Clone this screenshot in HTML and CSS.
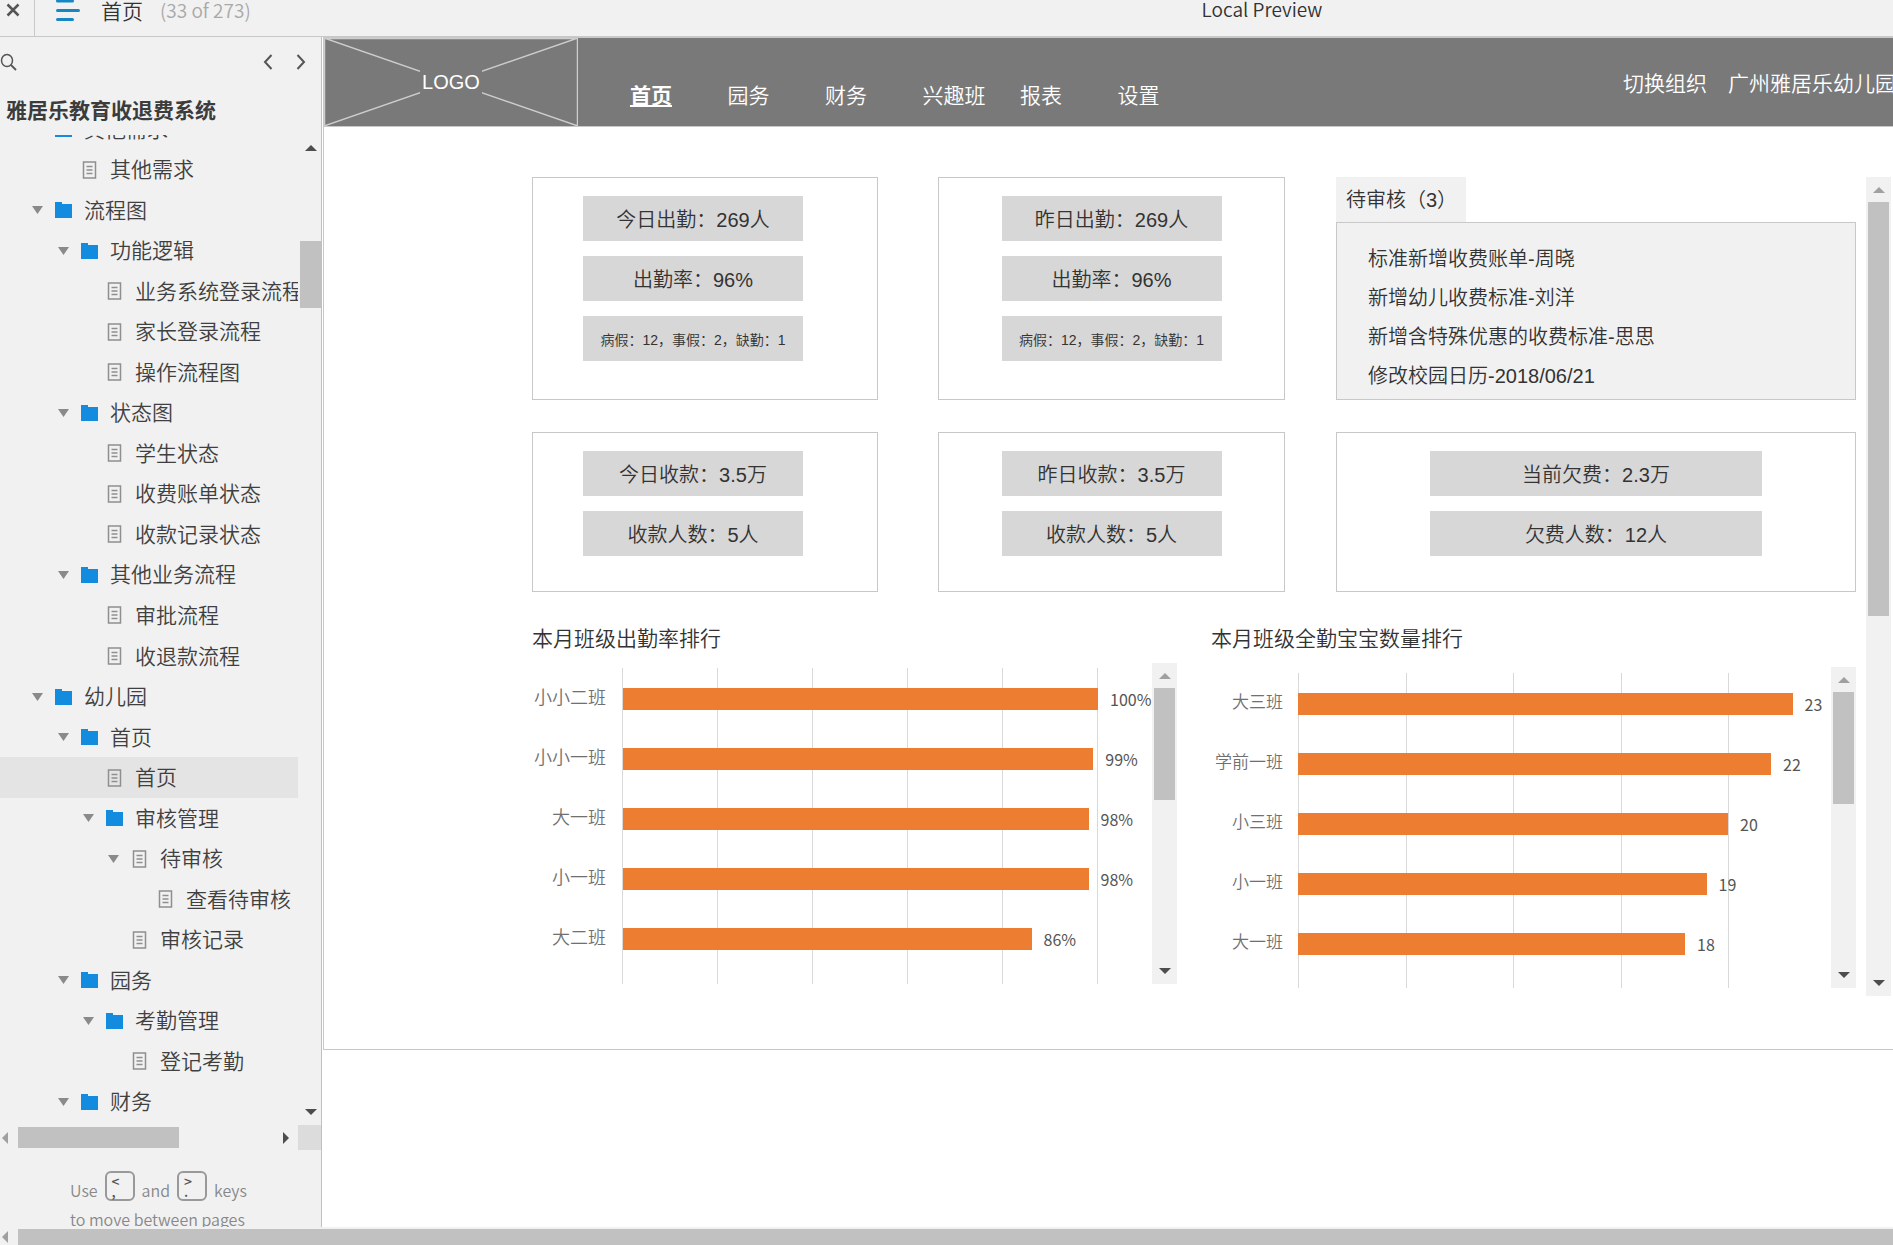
FILE: index.html
```html
<!DOCTYPE html>
<html lang="zh-CN">
<head>
<meta charset="utf-8">
<meta name="viewport" content="width=device-width, initial-scale=1">
<title>首页 - 雅居乐教育收退费系统</title>
<link rel="stylesheet" href="styles.css">
</head>
<body>
<svg width="0" height="0" class="symbols" aria-hidden="true">
  <symbol id="folder" viewBox="0 0 17 16"><path d="M0 0h7v2h10v14H0z" fill="#138bdf"/></symbol>
  <symbol id="doc" viewBox="0 0 14 18"><path d="M1 1h12v16H1z" fill="none" stroke="#8f8f8f" stroke-width="1.5"/><path d="M4 5.5h6M4 9h6M4 12.500h6" stroke="#8f8f8f" stroke-width="1.300"/></symbol>
  <symbol id="caret" viewBox="0 0 11 8"><path d="M0 0h11L5.500 8z" fill="#8a8a8a"/></symbol>
  <symbol id="up" viewBox="0 0 12 6"><path d="M6 0l6 6H0z" fill="currentColor"/></symbol>
  <symbol id="down" viewBox="0 0 12 6"><path d="M0 0h12L6 6z" fill="currentColor"/></symbol>
  <symbol id="left" viewBox="0 0 6 12"><path d="M6 0v12L0 6z" fill="currentColor"/></symbol>
  <symbol id="right" viewBox="0 0 6 12"><path d="M0 0l6 6-6 6z" fill="currentColor"/></symbol>
</svg>

<header class="topbar">
  <div class="topbar-left">
    <button class="close" type="button" aria-label="关闭"><svg width="14" height="14" viewBox="0 0 14 14"><path d="M1.500 1.500l11 11M12.500 1.500L1.500 12.500" stroke="#555" stroke-width="2.500"/></svg></button>
    <button class="menu" type="button" aria-label="页面"><svg width="24" height="22" viewBox="0 0 24 22"><path d="M1.500 1h15M1.500 10.500h21M1.500 19.500h15" stroke="#1787c4" stroke-width="3" stroke-linecap="round"/></svg></button>
    <span class="page-name">首页</span>
    <span class="page-count">(33 of 273)</span>
  </div>
  <div class="preview-name">Local Preview</div>
</header>

<div class="workspace">
  <aside class="sidebar">
    <div class="tools">
      <button type="button" aria-label="搜索"><svg width="17" height="18" viewBox="0 0 17 18"><ellipse cx="7" cy="7.500" rx="5.500" ry="6" fill="none" stroke="#555" stroke-width="1.500"/><path d="M11 12l5 5" stroke="#555" stroke-width="1.800"/></svg></button>
      <button type="button" class="prev" aria-label="上一页"><svg width="10" height="16" viewBox="0 0 10 16"><path d="M8.500 1L2 8l6.500 7" fill="none" stroke="#555" stroke-width="2"/></svg></button>
      <button type="button" aria-label="下一页"><svg width="10" height="16" viewBox="0 0 10 16"><path d="M1.500 1L8 8l-6.500 7" fill="none" stroke="#555" stroke-width="2"/></svg></button>
    </div>
    <h1>雅居乐教育收退费系统</h1>
    <div class="tree-area">
      <nav class="tree-view" aria-label="页面列表">
        <ul class="tree">
          <li class="l1"><button type="button" aria-label="折叠"><svg width="11" height="8"><use href="#caret"/></svg></button><svg class="icon" width="17" height="16"><use href="#folder"/></svg><a href="#">其他需求</a></li>
          <li class="l2 leaf"><svg class="icon" width="17" height="18"><use href="#doc"/></svg><a href="#">其他需求</a></li>
          <li class="l1"><button type="button" aria-label="折叠"><svg width="11" height="8"><use href="#caret"/></svg></button><svg class="icon" width="17" height="16"><use href="#folder"/></svg><a href="#">流程图</a></li>
          <li class="l2"><button type="button" aria-label="折叠"><svg width="11" height="8"><use href="#caret"/></svg></button><svg class="icon" width="17" height="16"><use href="#folder"/></svg><a href="#">功能逻辑</a></li>
          <li class="l3 leaf"><svg class="icon" width="17" height="18"><use href="#doc"/></svg><a href="#">业务系统登录流程</a></li>
          <li class="l3 leaf"><svg class="icon" width="17" height="18"><use href="#doc"/></svg><a href="#">家长登录流程</a></li>
          <li class="l3 leaf"><svg class="icon" width="17" height="18"><use href="#doc"/></svg><a href="#">操作流程图</a></li>
          <li class="l2"><button type="button" aria-label="折叠"><svg width="11" height="8"><use href="#caret"/></svg></button><svg class="icon" width="17" height="16"><use href="#folder"/></svg><a href="#">状态图</a></li>
          <li class="l3 leaf"><svg class="icon" width="17" height="18"><use href="#doc"/></svg><a href="#">学生状态</a></li>
          <li class="l3 leaf"><svg class="icon" width="17" height="18"><use href="#doc"/></svg><a href="#">收费账单状态</a></li>
          <li class="l3 leaf"><svg class="icon" width="17" height="18"><use href="#doc"/></svg><a href="#">收款记录状态</a></li>
          <li class="l2"><button type="button" aria-label="折叠"><svg width="11" height="8"><use href="#caret"/></svg></button><svg class="icon" width="17" height="16"><use href="#folder"/></svg><a href="#">其他业务流程</a></li>
          <li class="l3 leaf"><svg class="icon" width="17" height="18"><use href="#doc"/></svg><a href="#">审批流程</a></li>
          <li class="l3 leaf"><svg class="icon" width="17" height="18"><use href="#doc"/></svg><a href="#">收退款流程</a></li>
          <li class="l1"><button type="button" aria-label="折叠"><svg width="11" height="8"><use href="#caret"/></svg></button><svg class="icon" width="17" height="16"><use href="#folder"/></svg><a href="#">幼儿园</a></li>
          <li class="l2"><button type="button" aria-label="折叠"><svg width="11" height="8"><use href="#caret"/></svg></button><svg class="icon" width="17" height="16"><use href="#folder"/></svg><a href="#">首页</a></li>
          <li class="l3 leaf selected"><svg class="icon" width="17" height="18"><use href="#doc"/></svg><a href="#" aria-current="page">首页</a></li>
          <li class="l3"><button type="button" aria-label="折叠"><svg width="11" height="8"><use href="#caret"/></svg></button><svg class="icon" width="17" height="16"><use href="#folder"/></svg><a href="#">审核管理</a></li>
          <li class="l4"><button type="button" aria-label="折叠"><svg width="11" height="8"><use href="#caret"/></svg></button><svg class="icon" width="17" height="18"><use href="#doc"/></svg><a href="#">待审核</a></li>
          <li class="l5 leaf"><svg class="icon" width="17" height="18"><use href="#doc"/></svg><a href="#">查看待审核</a></li>
          <li class="l4 leaf"><svg class="icon" width="17" height="18"><use href="#doc"/></svg><a href="#">审核记录</a></li>
          <li class="l2"><button type="button" aria-label="折叠"><svg width="11" height="8"><use href="#caret"/></svg></button><svg class="icon" width="17" height="16"><use href="#folder"/></svg><a href="#">园务</a></li>
          <li class="l3"><button type="button" aria-label="折叠"><svg width="11" height="8"><use href="#caret"/></svg></button><svg class="icon" width="17" height="16"><use href="#folder"/></svg><a href="#">考勤管理</a></li>
          <li class="l4 leaf"><svg class="icon" width="17" height="18"><use href="#doc"/></svg><a href="#">登记考勤</a></li>
          <li class="l2"><button type="button" aria-label="折叠"><svg width="11" height="8"><use href="#caret"/></svg></button><svg class="icon" width="17" height="16"><use href="#folder"/></svg><a href="#">财务</a></li>
        </ul>
      </nav>
      <div class="vscroll tree-scroll"><svg width="12" height="6"><use href="#up"/></svg><i class="thumb"></i><svg class="end" width="12" height="6"><use href="#down"/></svg></div>
      <div class="hscroll tree-hscroll"><svg class="idle" width="6" height="12"><use href="#left"/></svg><i class="thumb"></i><svg class="end" width="6" height="12"><use href="#right"/></svg></div>
      <div class="corner"></div>
    </div>
    <footer class="hint">
      <p><span>Use</span><kbd><span>&lt;</span><span>,</span></kbd><span>and</span><kbd><span>&gt;</span><span>.</span></kbd><span>keys</span></p>
      <p>to move between pages</p>
    </footer>
  </aside>

  <main class="canvas">
    <div class="frame">
      <div class="site-head">
        <div class="logo">
          <svg viewBox="0 0 254 88" preserveAspectRatio="none"><path d="M0 0l254 88M254 0L0 88M253.500 0v88M.5 0v88M0 .5h254" fill="none" stroke="#cdcdcd" stroke-width="1.500"/></svg>
          <span>LOGO</span>
        </div>
        <nav class="site-nav" aria-label="主导航">
          <a href="#" class="active">首页</a><a href="#">园务</a><a href="#">财务</a><a href="#">兴趣班</a><a href="#">报表</a><a href="#">设置</a>
        </nav>
        <div class="account"><a href="#">切换组织</a><a href="#">广州雅居乐幼儿园</a></div>
      </div>

      <div class="dashboard">
        <div class="content">
          <div class="overview">
            <div class="pair">
              <section class="card attendance shifted"><button type="button">今日出勤：269人</button><button type="button">出勤率：96%</button><button type="button" class="small">病假：12，事假：2，缺勤：1</button></section>
              <section class="card attendance"><button type="button">昨日出勤：269人</button><button type="button">出勤率：96%</button><button type="button" class="small">病假：12，事假：2，缺勤：1</button></section>
            </div>
            <section class="review">
              <h2>待审核（3）</h2>
              <ul>
                <li><a href="#">标准新增收费账单-周晓</a></li>
                <li><a href="#">新增幼儿收费标准-刘洋</a></li>
                <li><a href="#">新增含特殊优惠的收费标准-思思</a></li>
                <li><a href="#">修改校园日历-2018/06/21</a></li>
              </ul>
            </section>
            <div class="pair">
              <section class="card shifted"><button type="button">今日收款：3.5万</button><button type="button">收款人数：5人</button></section>
              <section class="card"><button type="button">昨日收款：3.5万</button><button type="button">收款人数：5人</button></section>
            </div>
            <section class="card wide"><button type="button">当前欠费：2.3万</button><button type="button">欠费人数：12人</button></section>
          </div>

          <div class="charts">
            <section class="chart rate">
              <h2>本月班级出勤率排行</h2>
              <div class="chart-body">
                <div class="plot">
                  <div class="gridlines"><i></i><i></i><i></i><i></i><i></i></div>
                  <ol class="bars">
                    <li><span class="label">小小二班</span><span class="track"><i class="bar" style="width:100%"></i><b>100%</b></span></li>
                    <li><span class="label">小小一班</span><span class="track"><i class="bar" style="width:99%"></i><b>99%</b></span></li>
                    <li><span class="label">大一班</span><span class="track"><i class="bar" style="width:98%"></i><b>98%</b></span></li>
                    <li><span class="label">小一班</span><span class="track"><i class="bar" style="width:98%"></i><b>98%</b></span></li>
                    <li><span class="label">大二班</span><span class="track"><i class="bar" style="width:86%"></i><b>86%</b></span></li>
                  </ol>
                </div>
                <div class="vscroll"><svg class="idle" width="12" height="6"><use href="#up"/></svg><i class="thumb"></i><svg class="end" width="12" height="6"><use href="#down"/></svg></div>
              </div>
            </section>
            <section class="chart full">
              <h2>本月班级全勤宝宝数量排行</h2>
              <div class="chart-body">
                <div class="plot">
                  <div class="gridlines"><i></i><i></i><i></i><i></i></div>
                  <ol class="bars">
                    <li><span class="label">大三班</span><span class="track"><i class="bar" style="width:115%"></i><b>23</b></span></li>
                    <li><span class="label">学前一班</span><span class="track"><i class="bar" style="width:110%"></i><b>22</b></span></li>
                    <li><span class="label">小三班</span><span class="track"><i class="bar" style="width:100%"></i><b>20</b></span></li>
                    <li><span class="label">小一班</span><span class="track"><i class="bar" style="width:95%"></i><b>19</b></span></li>
                    <li><span class="label">大一班</span><span class="track"><i class="bar" style="width:90%"></i><b>18</b></span></li>
                  </ol>
                </div>
                <div class="vscroll"><svg class="idle" width="12" height="6"><use href="#up"/></svg><i class="thumb"></i><svg class="end" width="12" height="6"><use href="#down"/></svg></div>
              </div>
            </section>
          </div>
        </div>
        <div class="vscroll page-scroll"><svg class="idle" width="12" height="6"><use href="#up"/></svg><i class="thumb"></i><svg class="end" width="12" height="6"><use href="#down"/></svg></div>
      </div>
    </div>
  </main>
</div>
<div class="hscroll window-scroll"><svg class="idle" width="6" height="12"><use href="#left"/></svg><i class="thumb"></i></div>
</body>
</html>
```
FILE: styles.css
```css
* { box-sizing: border-box; }

body {
  margin: 0;
  height: 100vh;
  display: flex;
  flex-direction: column;
  overflow: hidden;
  background: #fff;
  color: #333;
  font-family: "Noto Sans CJK SC", sans-serif;
  font-size: 21px;
  font-weight: 350;
}

h1, h2, p, ul, ol { margin: 0; padding: 0; }
ul, ol { list-style: none; }
a { color: inherit; text-decoration: none; }
button { padding: 0; border: 0; background: none; font: inherit; color: inherit; }
svg { display: block; flex: none; }
.symbols { position: absolute; }

/* Top bar */
.topbar {
  flex: none;
  height: 37px;
  display: grid;
  grid-template-columns: 1fr 2fr;
  background: #f1f1f1;
  border-bottom: 1px solid #c8c8c8;
  line-height: 20px;
}
.topbar-left { display: flex; align-items: flex-start; }
.close { width: 35px; height: 36px; padding: 3px 0 0 6px; border-right: 1px solid #c8c8c8; }
.close svg { margin-bottom: 19px; }
.menu { margin: 0 21px; }
.page-count { margin-left: 17px; font-size: 19px; color: #a9a9a9; }
.preview-name { text-align: center; font-size: 19px; line-height: 18px; }

/* Sidebar */
.workspace { flex: 1; min-height: 0; display: flex; }
.sidebar {
  flex: none;
  width: 322px;
  display: flex;
  flex-direction: column;
  background: #f1f1f1;
  border-right: 1px solid #c0c0c0;
  overflow: hidden;
}
.tools { display: flex; align-items: center; height: 50px; padding-right: 15px; }
.tools .prev { margin-left: auto; margin-right: 23px; }
.sidebar h1 { height: 48px; padding-left: 6px; font-size: 21px; line-height: 44px; font-weight: 700; color: #3c3c3c; }
.tree-area {
  flex: 1;
  min-height: 0;
  display: grid;
  grid-template: minmax(0, 1fr) 25px / minmax(0, 1fr) 23px;
}
.tree-view { overflow: hidden; }
/* The list is scrolled part of a row past the top edge. */
.tree { display: grid; grid-auto-rows: 1fr; height: calc(100% + 23px); margin-top: -26px; }
.tree li { display: flex; align-items: center; white-space: nowrap; line-height: 30px; color: #404040; }
.tree a { padding-bottom: 3px; }
.tree button { width: 11px; margin-right: 12px; }
.tree .icon { margin-right: 12px; }
.tree .leaf .icon { margin-left: 23px; }
.tree .selected { background: #e4e4e4; }
.l1 { padding-left: 32px; }
.l2 { padding-left: 58px; }
.l3 { padding-left: 83px; }
.l4 { padding-left: 108px; }
.l5 { padding-left: 134px; }

.hint { flex: none; height: 77px; padding: 21px 0 0 70px; color: #888; font-size: 16px; line-height: 24px; white-space: nowrap; }
.hint p:first-child { display: flex; gap: 7px; align-items: flex-end; height: 31px; margin-bottom: 5px; }
kbd {
  display: flex;
  flex-direction: column;
  width: 30px;
  height: 30px;
  margin-bottom: 1px;
  padding: 3px 0 0 5px;
  border: 2px solid #999;
  border-radius: 6px;
  color: #555;
  font: 500 14px/10px "Noto Sans CJK SC", sans-serif;
}

/* Scrollbars */
.vscroll { display: flex; flex-direction: column; align-items: center; width: 25px; padding: 10px 2px; background: #f1f1f1; color: #4d4d4d; }
.hscroll { display: flex; align-items: center; background: #f1f1f1; color: #4d4d4d; }
.idle { color: #a0a0a0; }
.end { margin-top: auto; }
.hscroll .end { margin: 0 0 0 auto; }
.thumb { background: #c1c1c1; }
.vscroll .thumb { width: 100%; height: 112px; margin-top: 9px; }
.tree-scroll { width: 23px; padding: 10px 0 10px 2px; }
.tree-scroll .thumb { height: 67px; margin-top: 90px; }
.tree-hscroll { padding: 2px 9px 2px 2px; }
.tree-hscroll .thumb { width: 161px; height: 21px; margin-left: 10px; }
.corner { background: #dcdcdc; }
.window-scroll { flex: none; height: 18px; padding: 2px 0 0 2px; }
.window-scroll .thumb { flex: 1; align-self: stretch; margin-left: 10px; }

/* Prototype page */
.canvas { flex: 1; min-width: 0; padding-left: 1px; }
.frame { border: 1px solid #c8c8c8; border-right: 0; padding-bottom: 53px; font-family: "Liberation Sans", "Noto Sans CJK SC", sans-serif; }
.site-head { display: flex; height: 89px; background: #797979; border-bottom: 1px solid #c8c8c8; color: #fff; overflow: hidden; line-height: 30px; }
.logo { display: grid; width: 254px; flex: none; place-items: center; }
.logo svg, .logo span { grid-area: 1 / 1; }
.logo svg { width: 100%; height: 88px; }
.logo span { padding: 0 2px; background: #797979; font-size: 20px; line-height: 24px; }
.site-nav { display: grid; grid-template-columns: repeat(6, 1fr); width: 585px; flex: none; margin: 43px auto 0 52px; }
.site-nav .active { font-weight: 700; text-decoration: underline; }
.account { flex: none; display: flex; gap: 21px; margin: 31px -3px 0 0; }

.dashboard { display: flex; gap: 10px; padding: 50px 2px 0 208px; }
.content { flex: 1; min-width: 0; padding-bottom: 8px; }
.page-scroll { flex: none; }
.page-scroll .thumb { height: 414px; }

.overview { display: grid; grid-template-columns: minmax(0, 753fr) minmax(0, 520fr); gap: 32px 51px; }
.pair { display: grid; grid-template-columns: 346fr 347fr; gap: 60px; }
.card { display: flex; flex-direction: column; align-items: center; gap: 15px; min-height: 160px; padding-top: 18px; border: 1px solid #c8c8c8; }
.card.attendance { min-height: 223px; }
.card.shifted { padding-right: 24px; }
.card button { width: 220px; height: 45px; background: #d7d7d7; font-size: 20px; }
.card.wide button { width: 332px; }
.card .small { font-size: 14px; }

.review { display: flex; flex-direction: column; font-size: 20px; }
.review h2 { align-self: flex-start; width: 130px; height: 45px; padding: 1px 0 0 10px; background: #f1f1f1; font-size: 20px; font-weight: 350; line-height: 45px; white-space: nowrap; }
.review ul { flex: 1; padding: 17px 31px 0; border: 1px solid #c8c8c8; background: #f1f1f1; }
.review li { line-height: 39px; height: 39px; }
.review li:last-child { height: 30px; }

/* Charts */
.charts { display: grid; grid-template-columns: 1fr 1fr; gap: 34px; margin-top: 32px; }
.chart h2 { font-size: 21px; font-weight: 350; line-height: 30px; }
.chart-body { display: flex; height: 321px; margin-top: 9px; }
.full .chart-body { margin-top: 13px; }
.chart-body .vscroll { flex: none; }
.plot { flex: 1; display: grid; padding-top: 5px; font-family: "Noto Sans CJK SC", sans-serif; }
.gridlines, .bars { grid-area: 1 / 1; }
.gridlines { display: flex; margin: 0 54px 0 90px; border-right: 1px solid #d9d9d9; }
.gridlines i { flex: 1; border-left: 1px solid #d9d9d9; }
.full .gridlines { margin: 1px 102px 0 87px; }
.bars { padding-top: 1px; }
.full .bars { padding-top: 2px; }
.bars li { display: grid; grid-template-columns: 91px minmax(0, 1fr); align-items: center; height: 60px; padding-right: 54px; }
.full .bars li { grid-template-columns: 87px minmax(0, 1fr); padding-right: 103px; }
.label { padding: 0 17px 6px 0; text-align: right; font-size: 18px; line-height: 24px; color: #707070; white-space: nowrap; }
.full .label { padding-right: 15px; font-size: 17px; }
.track { display: flex; align-items: center; gap: 12px; }
.bar { flex: none; height: 22px; background: #ed7d31; }
.track b { font-size: 16px; font-weight: 400; line-height: 22px; color: #555; }
```
